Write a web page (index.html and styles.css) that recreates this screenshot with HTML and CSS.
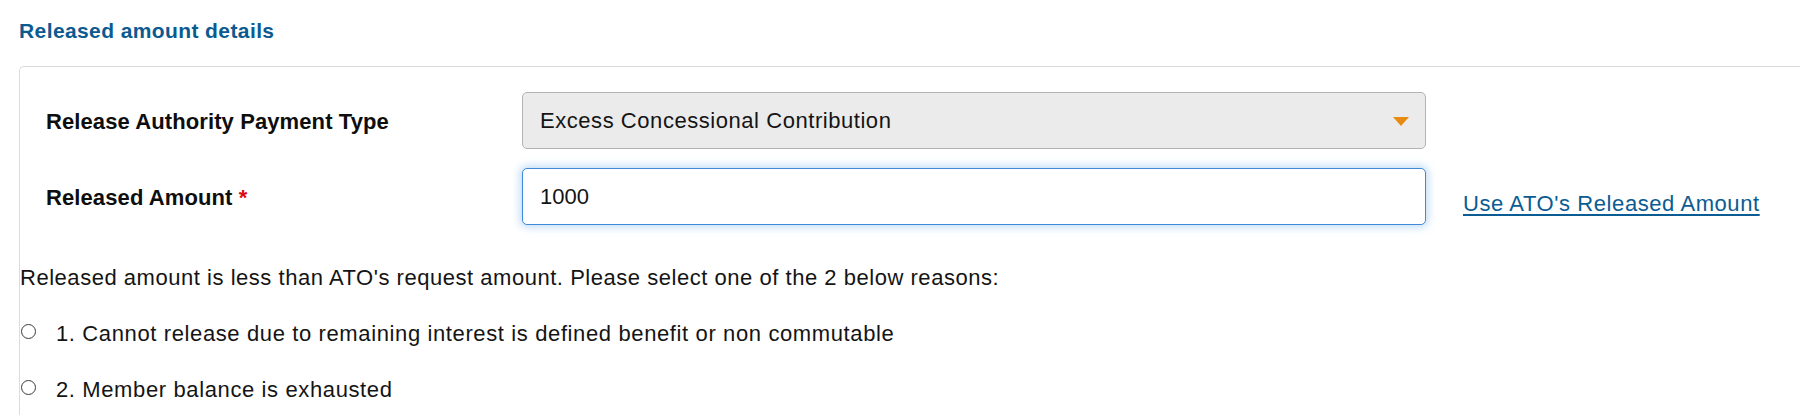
FILE: index.html
```html
<!DOCTYPE html>
<html lang="en">
<head>
<meta charset="utf-8">
<title>Released amount details</title>
<link rel="stylesheet" href="styles.css">
</head>
<body>
<div class="page">
  <h2 class="section-title">Released amount details</h2>
  <div class="card">
    <div class="form-grid">
      <label class="field-label">Release Authority Payment Type</label>
      <div class="select">
        <span class="select-value">Excess Concessional Contribution</span>
        <span class="caret"></span>
      </div>
      <div class="spacer"></div>

      <label class="field-label" for="amt">Released Amount <span class="req">*</span></label>
      <input class="text-input" id="amt" type="text" value="1000">
      <a class="ato-link" href="#">Use ATO's Released Amount</a>
    </div>

    <p class="notice">Released amount is less than ATO's request amount. Please select one of the 2 below reasons:</p>

    <div class="radio-row">
      <span class="radio"></span>
      <span class="radio-text">1. Cannot release due to remaining interest is defined benefit or non commutable</span>
    </div>
    <div class="radio-row">
      <span class="radio"></span>
      <span class="radio-text">2. Member balance is exhausted</span>
    </div>
  </div>
</div>
</body>
</html>
```

FILE: styles.css
```css
html, body {
  margin: 0;
  padding: 0;
  background: #ffffff;
  overflow: hidden;
}

body {
  font-family: "Liberation Sans", Arial, sans-serif;
  color: #141414;
  font-size: 22px;
}

.page {
  padding-left: 19px;
}

.section-title {
  margin: 19px 0 23px 0;
  font-size: 21px;
  line-height: 24px;
  font-weight: 700;
  letter-spacing: 0.4px;
  color: #0b5a90;
}

.card {
  border-top: 1px solid #dcdcdc;
  border-left: 1px solid #dcdcdc;
  border-top-left-radius: 5px;
  padding-top: 25px;
  padding-bottom: 10px;
}

.form-grid {
  display: grid;
  grid-template-columns: 476px 904px auto;
  grid-auto-rows: 57px;
  row-gap: 19px;
  padding-left: 26px;
  align-items: center;
}

.field-label {
  font-weight: 700;
  font-size: 22px;
  letter-spacing: 0.1px;
  color: #0e0e0e;
  padding-top: 3px;
}

.req {
  color: #e10a0a;
}

.select {
  box-sizing: border-box;
  height: 57px;
  display: flex;
  align-items: center;
  justify-content: space-between;
  background: #ebebeb;
  border: 1px solid #b3b3b3;
  border-radius: 5px;
  padding: 0 16px 0 17px;
}

.select-value {
  letter-spacing: 0.55px;
  color: #141414;
}

.caret {
  width: 0;
  height: 0;
  border-left: 8px solid transparent;
  border-right: 8px solid transparent;
  border-top: 9px solid #e98a12;
  margin-top: 2px;
}

.text-input {
  box-sizing: border-box;
  height: 57px;
  width: 904px;
  margin: 0;
  border: 1px solid #3f8ad6;
  border-radius: 5px;
  box-shadow: 0 0 8px 2px rgba(90, 160, 230, 0.4);
  padding: 0 17px 0 17px;
  font-family: "Liberation Sans", Arial, sans-serif;
  font-size: 22px;
  color: #141414;
  background: #ffffff;
  outline: none;
}

.ato-link {
  margin-left: 37px;
  padding-top: 15px;
  color: #0b5c92;
  text-decoration: underline;
  text-underline-offset: 3px;
  letter-spacing: 0.58px;
  white-space: nowrap;
}

.notice {
  margin: 38px 0 0 0;
  line-height: 30px;
  letter-spacing: 0.53px;
}

.radio-row {
  display: flex;
  align-items: center;
  margin-top: 26px;
  height: 30px;
}

.radio {
  box-sizing: border-box;
  width: 15px;
  height: 15px;
  border: 1px solid #3c3c3c;
  border-radius: 50%;
  background: #ffffff;
  margin: 0 20px 6px 1px;
  flex: none;
}

.radio-text {
  letter-spacing: 0.62px;
}
```
